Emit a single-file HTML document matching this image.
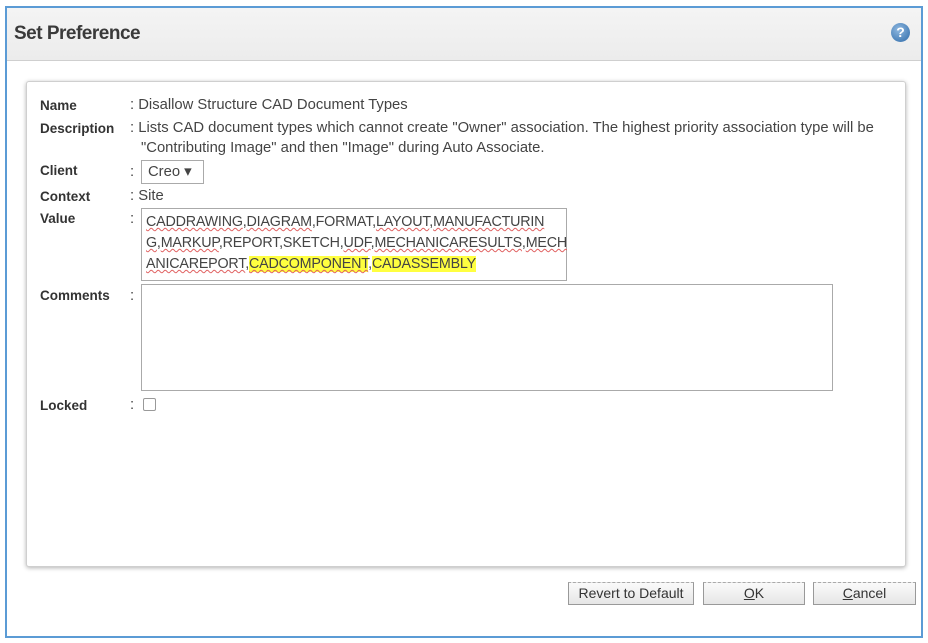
<!DOCTYPE html>
<html><head><style>
body{margin:0;width:928px;height:643px;background:#fff;font-family:"Liberation Sans",sans-serif;position:relative;overflow:hidden}
.outer{position:absolute;left:5px;top:6px;width:914px;height:628px;border:2px solid #5b9bd5;background:#fff}
.hdr{position:absolute;left:0;top:0;width:914px;height:52px;background:linear-gradient(#f4f4f4,#ececec);border-bottom:1px solid #cfcfcf}
.hdr .t{position:absolute;left:7px;top:15px;font-size:19px;font-weight:bold;color:#3a3a3a;letter-spacing:-0.5px}
.help{position:absolute;left:884px;top:15px;width:19px;height:19px;border-radius:50%;background:radial-gradient(circle at 40% 35%,#8fb8e0,#2d6aa8);color:#fff;font-size:14px;font-weight:bold;text-align:center;line-height:19px}
.panel{position:absolute;left:19px;top:73px;width:878px;height:484px;border:1px solid #cfcfcf;border-radius:3px;box-shadow:0 1px 4px rgba(0,0,0,.3);background:#fff}
.l{position:absolute;font-size:13.5px;font-weight:bold;color:#333}
.v{position:absolute;font-size:14.8px;color:#444;white-space:nowrap}
.box{position:absolute;border:1px solid #aaa;background:#fff}
.sq{text-decoration:underline wavy #e06060;text-decoration-thickness:1px}
.hl{background:#ffff40}
.btn{position:absolute;top:574px;height:21px;border:1px solid #999;border-top:1px dashed #aaa;background:linear-gradient(#fafafa,#e6e6e6);font-size:14px;color:#333;text-align:center;line-height:20px}
</style></head><body>
<div class="outer">
<div class="hdr"><div class="t">Set Preference</div><div class="help">?</div></div>
<div class="panel"></div>
<div class="btn" style="left:561px;width:124px">Revert to Default</div>
<div class="btn" style="left:696px;width:100px"><u>O</u>K</div>
<div class="btn" style="left:806px;width:101px"><u>C</u>ancel</div>
</div>
<div class="l" style="left:40px;top:98px">Name</div><div class="v" style="left:130px;top:97px">: Disallow Structure CAD Document Types</div>
<div class="l" style="left:40px;top:121px">Description</div><div class="v" style="left:130px;top:120px">: Lists CAD document types which cannot create "Owner" association. The highest priority association type will be</div>
<div class="v" style="left:141px;top:140px">"Contributing Image" and then "Image" during Auto Associate.</div>
<div class="l" style="left:40px;top:163px">Client</div><div class="v" style="left:130px;top:164px">:</div>
<div class="box" style="left:141px;top:160px;width:61px;height:22px"><span class="v" style="left:6px;top:2px">Creo ▾</span></div>
<div class="l" style="left:40px;top:189px">Context</div><div class="v" style="left:130px;top:188px">: Site</div>
<div class="l" style="left:40px;top:211px">Value</div><div class="v" style="left:130px;top:211px">:</div>
<div class="box" style="left:141px;top:208px;width:424px;height:71px"></div>
<div class="v" style="left:146px;top:212px;line-height:21px;font-size:14.3px;letter-spacing:-0.2px;width:420px"><span class="sq">CADDRAWING</span>,<span class="sq">DIAGRAM</span>,FORMAT,<span class="sq">LAYOUT</span>,<span class="sq">MANUFACTURIN</span><br><span class="sq">G</span>,<span class="sq">MARKUP</span>,REPORT,SKETCH,<span class="sq">UDF</span>,<span class="sq">MECHANICARESULTS</span>,<span class="sq">MECH</span><br><span class="sq">ANICAREPORT</span>,<span class="hl sq">CADCOMPONENT</span>,<span class="hl">CADASSEMBLY</span></div>
<div class="l" style="left:40px;top:288px">Comments</div><div class="v" style="left:130px;top:288px">:</div>
<div class="box" style="left:141px;top:284px;width:690px;height:105px"></div>
<div class="l" style="left:40px;top:398px">Locked</div><div class="v" style="left:130px;top:397px">:</div>
<div class="box" style="left:143px;top:398px;width:11px;height:11px;border-color:#999;border-radius:2px"></div>
</body></html>
